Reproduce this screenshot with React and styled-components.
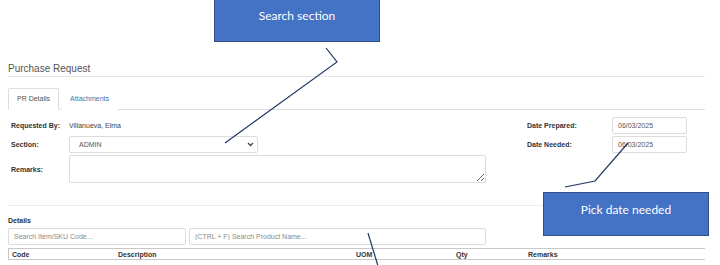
import React from "react";
import styled, { createGlobalStyle } from "styled-components";

const GlobalStyle = createGlobalStyle`
  html, body {
    margin: 0;
    padding: 0;
    background: #fff;
    overflow: hidden;
  }
  body {
    font-family: "Liberation Sans", Arial, sans-serif;
    color: #333;
  }
`;

/*************************************************************************/

let Page = styled.div`
  position: relative;
  width: 720px;
  height: 265px;
  box-sizing: border-box;
  padding: 63px 15px 0 8px;
  overflow: hidden;
`;

let Title = styled.div`
  font-size: 10px;
  line-height: 12px;
  color: #555;
  padding-bottom: 1px;
  border-bottom: 1px solid #e6e6e6;
`;

let Tabs = styled.div`
  display: flex;
  gap: 2px;
  margin-top: 11px;
  border-bottom: 1px solid #dedede;
`;

let Tab = styled.div`
  font-size: 7px;
  line-height: 20px;
  padding: 0 8px;
  margin-bottom: -1px;
  border: 1px solid ${p => (p.$active ? "#dedede" : "transparent")};
  border-bottom-color: ${p => (p.$active ? "#fff" : "transparent")};
  border-radius: 2px 2px 0 0;
  background: #fff;
  color: ${p => (p.$active ? "#555" : "#337ab7")};
`;

let FormGrid = styled.div`
  display: grid;
  grid-template-columns: 58px 417px 41px 85px 75px;
  grid-template-rows: 17px 17px 28px;
  row-gap: 2px;
  margin: 7px 0 0 3px;
  align-items: center;
`;

let Label = styled.div`
  font-size: 7px;
  font-weight: bold;
  color: #333;
  grid-column: ${p => p.$col};
`;

let Value = styled.div`
  font-size: 7px;
  color: #444;
  grid-column: ${p => p.$col};
`;

let Field = styled.input`
  box-sizing: border-box;
  height: 17px;
  width: ${p => p.$w || "100%"};
  margin: 0;
  padding: 0 5px;
  border: 1px solid #dcdcdc;
  border-radius: 2px;
  font-family: "Liberation Sans", Arial, sans-serif;
  font-size: 7px;
  color: #555;
  background: #fff;
  outline: none;
  &::placeholder {
    color: #8a8a8a;
  }
`;

let DateField = styled(Field)`
  grid-column: 5;
`;

let SelectBox = styled.div`
  grid-column: 2;
  box-sizing: border-box;
  width: 189px;
  height: 17px;
  display: flex;
  align-items: center;
  justify-content: space-between;
  padding: 0 3px 0 9px;
  border: 1px solid #dcdcdc;
  border-radius: 2px;
  font-size: 7px;
  color: #555;
`;

let TextArea = styled.textarea`
  grid-column: 2;
  box-sizing: border-box;
  width: 417px;
  height: 28px;
  margin: 0;
  border: 1px solid #dcdcdc;
  border-radius: 2px;
  font-family: "Liberation Sans", Arial, sans-serif;
  font-size: 7px;
  outline: none;
`;

let Divider = styled.div`
  margin-top: 22px;
  border-top: 1px solid #ececec;
`;

let SectionLabel = styled.div`
  margin-top: 10px;
  font-size: 7px;
  line-height: 10px;
  font-weight: bold;
  color: #333;
`;

let SearchRow = styled.div`
  display: flex;
  gap: 3px;
  margin-top: 2px;
`;

let Table = styled.table`
  width: 100%;
  margin-top: 3px;
  border-collapse: collapse;
  border-left: 1px solid #c8c8c8;
  table-layout: fixed;
`;

let Th = styled.th`
  width: ${p => p.$w || "auto"};
  padding: 0 3px;
  height: 10px;
  text-align: left;
  font-size: 7px;
  line-height: 9px;
  font-weight: bold;
  color: #333;
  border-top: 1px solid #c8c8c8;
  border-bottom: 1px solid #c8c8c8;
`;

let Callout = styled.div`
  position: absolute;
  left: ${p => p.$x}px;
  top: ${p => p.$y}px;
  width: 166px;
  height: 44px;
  box-sizing: border-box;
  padding-top: 8px;
  background: #4472c4;
  border: 1px solid #2f4f86;
  color: #fff;
  text-align: center;
  font-family: Lato, "Open Sans", sans-serif;
  font-size: 12px;
  line-height: 18px;
`;

let Lines = styled.svg`
  position: absolute;
  left: 0;
  top: 0;
  pointer-events: none;
`;

let Chevron = () => (
  <svg width="7" height="5" viewBox="0 0 7 5">
    <path d="M1 1 L3.5 3.5 L6 1" fill="none" stroke="#444" strokeWidth="1.3" />
  </svg>
);

export default function App() {
  return (
    <>
      <GlobalStyle />
      <Page>
        <Title>Purchase Request</Title>
        <Tabs>
          <Tab $active>PR Details</Tab>
          <Tab>Attachments</Tab>
        </Tabs>

        <FormGrid>
          <Label $col={1}>Requested By:</Label>
          <Value $col={2}>Villanueva, Elma</Value>
          <Label $col={4}>Date Prepared:</Label>
          <DateField value="06/03/2025" readOnly />

          <Label $col={1}>Section:</Label>
          <SelectBox>
            <span>ADMIN</span>
            <Chevron />
          </SelectBox>
          <Label $col={4}>Date Needed:</Label>
          <DateField value="06/03/2025" readOnly />

          <Label $col={1}>Remarks:</Label>
          <TextArea />
        </FormGrid>

        <Divider />
        <SectionLabel>Details</SectionLabel>
        <SearchRow>
          <Field $w="178px" placeholder="Search Item/SKU Code..." />
          <Field $w="297px" placeholder="(CTRL + F) Search Product Name..." />
        </SearchRow>

        <Table>
          <thead>
            <tr>
              <Th $w="100px">Code</Th>
              <Th $w="232px">Description</Th>
              <Th $w="94px">UOM</Th>
              <Th $w="66px">Qty</Th>
              <Th>Remarks</Th>
            </tr>
          </thead>
        </Table>

        <Callout $x={214} $y={-2}>Search section</Callout>
        <Callout $x={543} $y={192}>Pick date needed</Callout>

        <Lines width="720" height="265">
          <polyline points="326,48 337,62 225,143" fill="none" stroke="#1f3763" strokeWidth="1.2" />
          <polyline points="565,187 595,181 628,143" fill="none" stroke="#1f3763" strokeWidth="1.2" />
          <polyline points="368,233 378,266" fill="none" stroke="#1f3763" strokeWidth="1.2" />
        </Lines>
      </Page>
    </>
  );
}
